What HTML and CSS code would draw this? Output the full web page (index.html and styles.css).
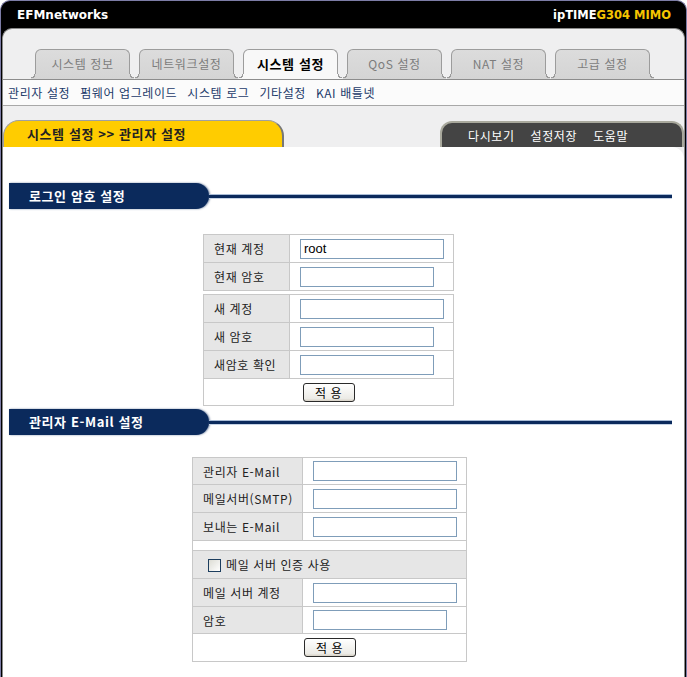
FILE: index.html
```html
<!DOCTYPE html>
<html lang="ko">
<head>
    <meta charset="UTF-8">
    <title>ipTIME G304 MIMO - 관리자 설정</title>
    <link rel="stylesheet" href="styles.css">
</head>
<body>
    <div class="frame">
        <div class="topbar">
            <span class="brand">EFMnetworks</span>
            <span class="model">ipTIME<em>G304 MIMO</em></span>
        </div>

        <div class="panel">
            <!-- 상단 메뉴 탭 -->
            <ul class="tabs">
                <li>시스템 정보</li>
                <li>네트워크설정</li>
                <li class="on">시스템 설정</li>
                <li>QoS 설정</li>
                <li>NAT 설정</li>
                <li>고급 설정</li>
            </ul>

            <div class="submenu">
                <a>관리자 설정</a>
                <a>펌웨어 업그레이드</a>
                <a>시스템 로그</a>
                <a>기타설정</a>
                <a>KAI 배틀넷</a>
            </div>

            <div class="pathbar">
                <div class="path">시스템 설정 &gt;&gt; 관리자 설정</div>
                <div class="actions">
                    <a>다시보기</a>
                    <a>설정저장</a>
                    <a>도움말</a>
                </div>
            </div>

            <div class="content">
                <!-- 로그인 암호 -->
                <div class="sec">
                    <div class="sec-title">로그인 암호 설정</div>
                    <div class="sec-line"></div>
                </div>

                <table class="form login">
                    <tr>
                        <td class="label">현재 계정</td>
                        <td><input type="text" class="wide" value="root"></td>
                    </tr>
                    <tr>
                        <td class="label">현재 암호</td>
                        <td><input type="password"></td>
                    </tr>
                </table>

                <table class="form login second">
                    <tr>
                        <td class="label">새 계정</td>
                        <td><input type="text" class="wide"></td>
                    </tr>
                    <tr>
                        <td class="label">새 암호</td>
                        <td><input type="password"></td>
                    </tr>
                    <tr>
                        <td class="label">새암호 확인</td>
                        <td><input type="password"></td>
                    </tr>
                    <tr class="short">
                        <td colspan="2" class="btn-cell"><button>적 용</button></td>
                    </tr>
                </table>

                <!-- 관리자 E-Mail -->
                <div class="sec sec-mail">
                    <div class="sec-title">관리자 E-Mail 설정</div>
                    <div class="sec-line"></div>
                </div>

                <table class="form mail">
                    <tr class="short">
                        <td class="label">관리자 E-Mail</td>
                        <td><input type="text" class="wide"></td>
                    </tr>
                    <tr>
                        <td class="label">메일서버(SMTP)</td>
                        <td><input type="text" class="wide"></td>
                    </tr>
                    <tr>
                        <td class="label">보내는 E-Mail</td>
                        <td><input type="text" class="wide"></td>
                    </tr>
                    <tr class="spacer">
                        <td colspan="2"></td>
                    </tr>
                    <tr>
                        <td colspan="2" class="label check-cell">
                            <span class="check"></span>메일 서버 인증 사용
                        </td>
                    </tr>
                    <tr>
                        <td class="label">메일 서버 계정</td>
                        <td><input type="text" class="wide"></td>
                    </tr>
                    <tr class="short">
                        <td class="label">암호</td>
                        <td><input type="password"></td>
                    </tr>
                    <tr>
                        <td colspan="2" class="btn-cell"><button>적 용</button></td>
                    </tr>
                </table>
            </div>
        </div>
    </div>
</body>
</html>
```

FILE: styles.css
```css
:root {
    --navy: #0b2a5c;
    --cell-border: #c8c8c8;
    --label-bg: #e6e6e6;
    --tab-line: #9c9c9c;
}

* {
    box-sizing: border-box;
    margin: 0;
    padding: 0;
}

body {
    width: 687px;
    height: 677px;
    overflow: hidden;
    background: #fff;
    font-family: "Noto Sans CJK KR", "Noto Sans", sans-serif;
    font-size: 12px;
    letter-spacing: 0.6px;
    color: #222;
}

/* 바깥 검정 틀 */
.frame {
    background: #000;
    border: 1px solid #7c7ca6;
    border-bottom: none;
    border-radius: 10px 10px 0 0;
    height: 677px;
}

.topbar {
    height: 27px;
    display: flex;
    justify-content: space-between;
    align-items: center;
    padding: 0 15px 0 16px;
    font-family: "DejaVu Sans", sans-serif;
    font-weight: bold;
    font-size: 12px;
    letter-spacing: 0;
    color: #fff;
}

.model {
    font-size: 11.5px;
}

.model em {
    font-style: normal;
    color: #f5c400;
}

.panel {
    margin: 0 1px;
    height: 650px;
    background: #efeff0;
    border: 1px solid #8a8a8a;
    border-bottom: none;
    border-radius: 10px 10px 0 0;
}

/* 메뉴 탭 */
.tabs {
    list-style: none;
    display: flex;
    gap: 9px;
    padding: 20px 0 0 32px;
}

.tabs li {
    --tab-bg: #d4d4d4;
    position: relative;
    width: 95px;
    height: 30px;
    line-height: 28px;
    text-align: center;
    background: linear-gradient(#dcdcdc, var(--tab-bg));
    color: #7c7c7c;
    border: 1px solid var(--tab-line);
    border-bottom: none;
    border-radius: 6px 6px 0 0;
}

/* 탭 아래쪽 곡선 */
.tabs li::before,
.tabs li::after {
    content: "";
    position: absolute;
    bottom: 0;
    width: 5px;
    height: 5px;
}

.tabs li::before {
    left: -5px;
    background: radial-gradient(circle at 0 0, transparent 3.5px, var(--tab-line) 3.5px, var(--tab-line) 4.5px, var(--tab-bg) 4.5px);
}

.tabs li::after {
    right: -5px;
    background: radial-gradient(circle at 100% 0, transparent 3.5px, var(--tab-line) 3.5px, var(--tab-line) 4.5px, var(--tab-bg) 4.5px);
}

.tabs li.on {
    --tab-bg: #f8f8f8;
    background: var(--tab-bg);
    color: #000;
    font-weight: bold;
    font-size: 13px;
}

.submenu {
    height: 27px;
    display: flex;
    align-items: center;
    gap: 10px;
    padding-left: 5px;
    background: #fbfbfb;
    border-top: 1px solid #8c8c8c;
    border-bottom: 1px solid #a8a8a8;
}

.submenu a {
    color: #1c3a6a;
}

/* 경로 / 버튼 탭 */
.pathbar {
    margin-top: 14px;
    height: 27px;
    display: flex;
    justify-content: space-between;
    align-items: flex-end;
}

.path {
    width: 281px;
    height: 27px;
    padding-left: 23px;
    line-height: 25px;
    background: #ffcc00;
    border: 1px solid #a0a0a0;
    border-right: 2px solid #777;
    border-bottom: none;
    border-radius: 16px 16px 0 0;
    font-size: 13px;
    font-weight: bold;
    color: #222;
}

.actions {
    width: 244px;
    height: 26px;
    display: flex;
    gap: 16px;
    align-items: center;
    padding-left: 26px;
    background: #444;
    border: 2px solid #a9a99d;
    border-bottom: none;
    border-radius: 12px 12px 0 0;
    color: #fff;
}

.content {
    height: 560px;
    background: #fff;
    border-radius: 0 12px 0 0;
    padding-top: 36px;
}

/* 섹션 제목 */
.sec {
    display: flex;
    align-items: center;
    margin: 0 12px 0 6px;
}

.sec-title {
    width: 200px;
    height: 26px;
    line-height: 26px;
    padding-left: 20px;
    background: var(--navy);
    border-radius: 0 13px 13px 0;
    box-shadow: 1px 0 2px rgba(11, 42, 92, 0.6);
    color: #fff;
    font-size: 13px;
    font-weight: bold;
}

.sec-line {
    flex: 1;
    height: 5px;
    background: var(--navy);
    border-top: 1px solid #a9bcd6;
    border-bottom: 1px solid #c6d3e4;
}

.sec-mail {
    margin-top: 3px;
}

/* 입력 표 */
.form {
    border-collapse: collapse;
    border: 1px solid var(--cell-border);
    background: #fff;
}

.form td {
    height: 28px;
    border: 1px solid var(--cell-border);
    padding: 0 0 0 10px;
    vertical-align: middle;
}

.form tr.short td {
    height: 27px;
}

.form td.label {
    background: var(--label-bg);
    padding-left: 10px;
}

.login {
    width: 251px;
    margin: 25px 0 0 200px;
}

.login td.label {
    width: 86px;
}

.login.second {
    margin-top: 3px;
}

.mail {
    width: 275px;
    margin: 22px 0 0 189px;
}

.mail td.label {
    width: 110px;
}

.mail .spacer td {
    height: 10px;
}

.mail td.check-cell {
    padding-left: 15px;
}

.check {
    display: inline-block;
    width: 13px;
    height: 13px;
    margin-right: 5px;
    vertical-align: -2px;
    border: 1px solid #1c3d5e;
    background: linear-gradient(135deg, #dcdcd4, #fff);
}

input {
    width: 134px;
    height: 20px;
    padding: 0 3px;
    border: 1px solid #7f9db9;
    font-family: "Liberation Sans", sans-serif;
    font-size: 13px;
    letter-spacing: 0;
    color: #000;
    background: #fff;
}

input.wide {
    width: 144px;
}

.btn-cell {
    text-align: center;
}

.form td.btn-cell {
    padding: 0;
}

button {
    width: 52px;
    height: 19px;
    font-family: "Noto Sans CJK KR", sans-serif;
    font-size: 12px;
    letter-spacing: 0.6px;
    line-height: 17px;
    color: #000;
    background: linear-gradient(#fff, #ecebe6 85%, #d6d0c5);
    border: 1px solid #2a2a2a;
    border-radius: 3px;
}
```
